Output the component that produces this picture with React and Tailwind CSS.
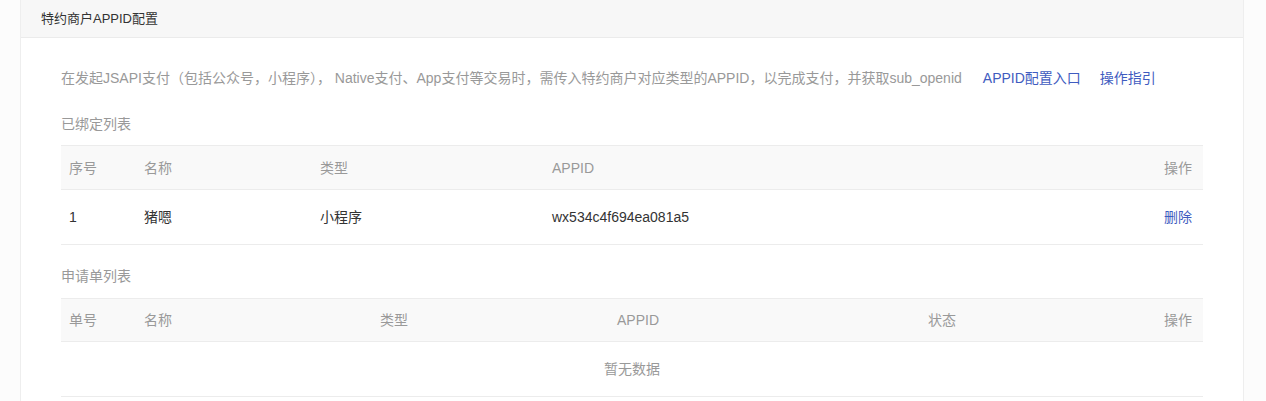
import React from "react";

const font = { fontFamily: '"Liberation Sans", "Noto Sans CJK SC", sans-serif' };

const bound = [{ id: 1, name: "猪嗯", type: "小程序", appid: "wx534c4f694ea081a5" }];

const App = () => (
  <div className="w-[1266px] h-[401px] overflow-hidden bg-[#fcfcfc] pl-5 pr-[22px] text-[14px] leading-5" style={font}>
    <div className="h-full bg-white border-x border-[#eeeeee]">
      <div className="h-[38px] bg-[#f7f7f7] border-b border-[#ebebeb] flex items-center px-5 text-[13px] text-[#333]">
        特约商户APPID配置
      </div>

      <div className="px-10">
        <div className="pt-[30px] flex items-center text-[#999]">
          <span>在发起JSAPI支付（包括公众号，小程序）， Native支付、App支付等交易时，需传入特约商户对应类型的APPID，以完成支付，并获取sub_openid</span>
          <a className="ml-[21px] text-[#3f5cc0]">APPID配置入口</a>
          <a className="ml-[19px] text-[#3f5cc0]">操作指引</a>
        </div>

        <div className="mt-[26px] text-[#999]">已绑定列表</div>

        <table className="mt-[11px] w-full border-collapse table-fixed">
          <thead>
            <tr className="bg-[#f9f9f9] text-[#999] h-[44px] border-y border-[#ececec]">
              <th className="w-[75px] text-left font-normal pl-2">序号</th>
              <th className="w-[176px] text-left font-normal pl-2">名称</th>
              <th className="w-[232px] text-left font-normal pl-2">类型</th>
              <th className="text-left font-normal pl-2">APPID</th>
              <th className="w-[100px] text-right font-normal pr-[11px]">操作</th>
            </tr>
          </thead>
          <tbody>
            {bound.map((row) => (
              <tr key={row.id} className="h-[55px] border-b border-[#ececec] text-[#333]">
                <td className="pl-2">{row.id}</td>
                <td className="pl-2">{row.name}</td>
                <td className="pl-2">{row.type}</td>
                <td className="pl-2">{row.appid}</td>
                <td className="text-right pr-[11px] text-[#3f5cc0]">删除</td>
              </tr>
            ))}
          </tbody>
        </table>

        <div className="mt-[21px] text-[#999]">申请单列表</div>

        <table className="mt-[12px] w-full border-collapse table-fixed">
          <thead>
            <tr className="bg-[#f9f9f9] text-[#999] h-[43px] border-y border-[#ececec]">
              <th className="w-[75px] text-left font-normal pl-2">单号</th>
              <th className="w-[164px] text-left font-normal pl-2">名称</th>
              <th className="w-[188px] text-center font-normal">类型</th>
              <th className="w-[300px] text-center font-normal">APPID</th>
              <th className="w-[308px] text-center font-normal">状态</th>
              <th className="text-right font-normal pr-[11px]">操作</th>
            </tr>
          </thead>
          <tbody>
            <tr className="h-[55px] border-b border-[#ececec]">
              <td colSpan={6} className="text-center text-[#999]">暂无数据</td>
            </tr>
          </tbody>
        </table>
      </div>
    </div>
  </div>
);

export default App;
